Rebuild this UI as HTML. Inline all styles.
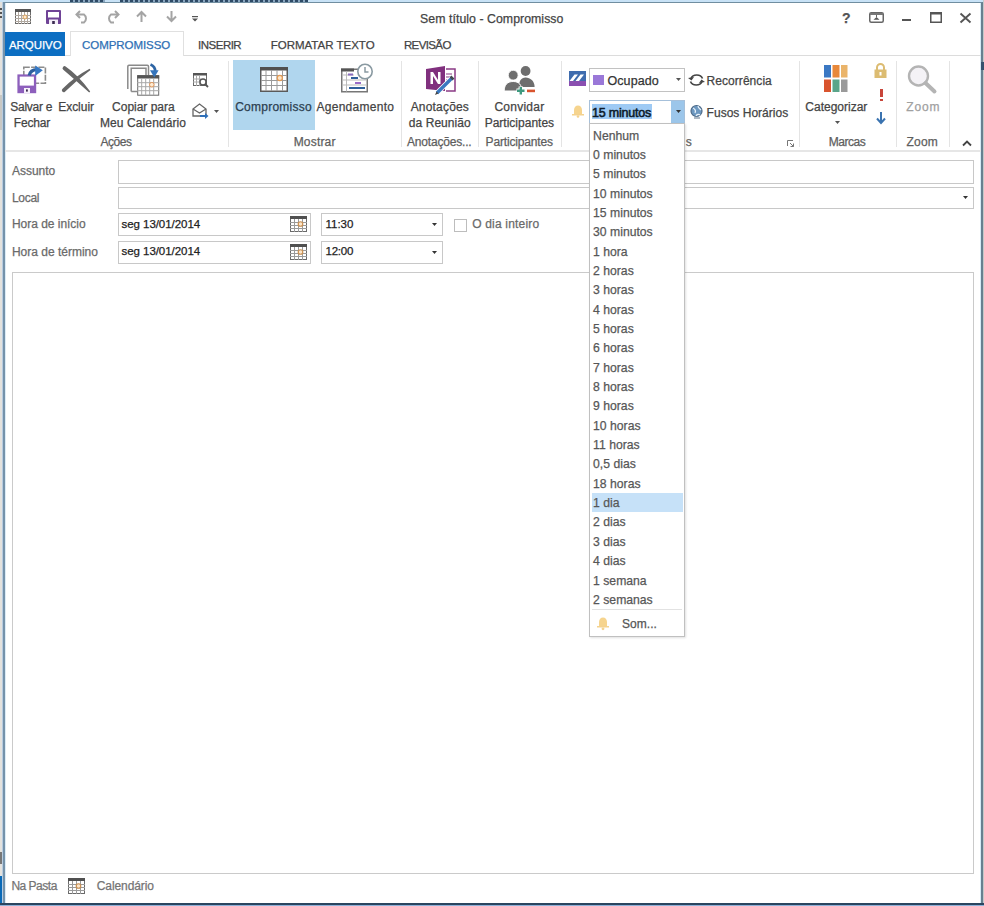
<!DOCTYPE html>
<html><head><meta charset="utf-8">
<style>
html,body{margin:0;padding:0}
body{width:984px;height:906px;overflow:hidden;position:relative;background:#e4e2de;font-family:"Liberation Sans",sans-serif;}
.a{position:absolute}
.t{position:absolute;white-space:nowrap;line-height:1;font-size:12px;color:#444;-webkit-text-stroke:0.25px currentColor}
.sep{position:absolute;width:1px;top:61px;height:86px;background:#e4e4e4}
.box{position:absolute;border:1px solid #c8c8c8;background:#fff;box-sizing:border-box}
svg{position:absolute;overflow:visible}
</style></head><body>
<!-- background strips -->
<div class="a" style="left:0;top:0;width:984px;height:2px;background:#c8e2f6"></div>
<div class="a" style="left:70px;top:0;width:35px;height:2px;background:repeating-linear-gradient(90deg,#2e4a66 0 3px,#8aa6c0 3px 5px)"></div>
<div class="a" style="left:120px;top:0;width:188px;height:2px;background:repeating-linear-gradient(90deg,#2e4a66 0 3px,#8aa6c0 3px 5px)"></div>
<div class="a" style="left:0;top:903px;width:984px;height:3px;background:#8eb0d8"></div>
<div class="a" style="left:0;top:903px;width:984px;height:2px;background:#2a4560"></div>
<div class="a" style="left:0;top:876px;width:3px;height:27px;background:#0a6ab8"></div>
<div class="a" style="left:983px;top:0;width:1px;height:903px;background:#c4c8c8"></div>
<div class="a" style="left:0;top:8px;width:3px;height:2px;background:#555"></div>
<div class="a" style="left:0;top:12px;width:3px;height:2px;background:#555"></div>
<div class="a" style="left:0;top:16px;width:3px;height:2px;background:#555"></div>
<div class="a" style="left:0;top:95px;width:3px;height:35px;background:#c8c8c4"></div>
<div class="a" style="left:0;top:852px;width:3px;height:12px;background:#777"></div>

<!-- window -->
<div class="a" style="left:3px;top:2px;width:980px;height:901px;background:#fff;box-sizing:border-box;border-top:1px solid #708ea0;border-left:2px solid #7592aa;border-right:2px solid #668090;box-shadow:-1px 0 0 #b8cce0, inset 1px 0 0 #dcecf6, inset -1px 0 0 #d4eaf6"></div>

<div class="a" style="left:981px;top:62px;width:3px;height:8px;background:#34526e"></div>
<!-- ===== title bar ===== -->
<!-- QAT calendar -->
<svg style="left:15px;top:9px" width="16" height="15" viewBox="0 0 16 15">
 <rect x="0.5" y="0.5" width="15" height="14" fill="#fff" stroke="#6a6a6a"/>
 <rect x="0" y="0" width="16" height="3" fill="#555"/>
 <path d="M3.5 3v12M6.5 3v12M9.5 3v12M12.5 3v12M0 6.5h16M0 9.5h16M0 12.5h16" stroke="#b0a8a0" stroke-width="1"/>
 <circle cx="10" cy="8" r="2" fill="#fde9cf" stroke="#d9a05a" stroke-width="1"/>
</svg>
<!-- QAT save -->
<svg style="left:45.5px;top:10px" width="15" height="14" viewBox="0 0 15 14">
 <rect x="0" y="0" width="15" height="14" rx="1" fill="#6f4396"/>
 <rect x="2" y="2" width="11" height="5.5" fill="#fff"/>
 <rect x="3" y="9.5" width="9" height="4.5" fill="#f4eef8"/>
 <rect x="6.2" y="11" width="2.6" height="3" fill="#3a2a50"/>
</svg>
<!-- undo / redo / up / down / customize -->
<svg style="left:75px;top:10px" width="16" height="14" viewBox="0 0 16 14" fill="none" stroke="#a4a4a4" stroke-width="2">
 <path d="M5 1L1.5 4.5 5 8"/><path d="M2 4.5h7a5 5 0 0 1 0 8H6"/>
</svg>
<svg style="left:104px;top:10px" width="16" height="14" viewBox="0 0 16 14" fill="none" stroke="#a4a4a4" stroke-width="2">
 <path d="M11 1l3.5 3.5L11 8"/><path d="M14 4.5H7a5 5 0 0 0 0 8h3"/>
</svg>
<svg style="left:136px;top:11px" width="11" height="11" viewBox="0 0 11 11" fill="none" stroke="#a4a4a4" stroke-width="2">
 <path d="M1 5.5L5.5 1 10 5.5M5.5 1.5V11"/>
</svg>
<svg style="left:166px;top:11px" width="11" height="11" viewBox="0 0 11 11" fill="none" stroke="#a4a4a4" stroke-width="2">
 <path d="M1 5.5L5.5 10 10 5.5M5.5 9.5V0"/>
</svg>
<svg style="left:192px;top:16px" width="6" height="6" viewBox="0 0 6 6">
 <rect x="0" y="0" width="6" height="1.2" fill="#555"/><path d="M0 2.5h6L3 5.5z" fill="#555"/>
</svg>
<!-- window buttons -->
<div class="t" style="left:842px;top:11px;font-size:14px;font-weight:bold;color:#555">?</div>
<svg style="left:869px;top:11.5px" width="15" height="11" viewBox="0 0 15 11">
 <rect x="0.75" y="0.75" width="13.5" height="9.5" rx="1.5" fill="none" stroke="#666" stroke-width="1.5"/>
 <rect x="1" y="1" width="13" height="2" fill="#777"/>
 <path d="M4.5 7.8L7.5 5 10.5 7.8z" fill="#555"/>
 <rect x="7" y="3" width="1" height="2" fill="#666"/>
</svg>
<div class="a" style="left:902px;top:19px;width:9px;height:2px;background:#555"></div>
<svg style="left:930px;top:12px" width="12" height="11" viewBox="0 0 12 11">
 <rect x="0.75" y="0.75" width="10.5" height="9.5" fill="none" stroke="#555" stroke-width="1.5"/>
 <rect x="0" y="0" width="12" height="2.5" fill="#555"/>
</svg>
<svg style="left:960px;top:13px" width="11" height="10" viewBox="0 0 11 10" stroke="#555" stroke-width="1.9">
 <path d="M0.5 0.5L10.5 9.5M10.5 0.5L0.5 9.5"/>
</svg>

<!-- ===== tabs ===== -->
<div class="a" style="left:5px;top:55px;width:976px;height:1px;background:#dcdcdc"></div>
<div class="a" style="left:5px;top:32px;width:60px;height:24px;background:#0c6ec2"></div>
<div class="a" style="left:70px;top:31px;width:114px;height:25px;background:#fff;border:1px solid #e0e0e0;border-bottom:none;box-sizing:border-box"></div>

<!-- ===== ribbon ===== -->
<div class="a" style="left:5px;top:150px;width:976px;height:2px;background:#e6e6e6"></div>
<div class="sep" style="left:228px"></div>
<div class="sep" style="left:401px"></div>
<div class="sep" style="left:478px"></div>
<div class="sep" style="left:561px"></div>
<div class="sep" style="left:799px"></div>
<div class="sep" style="left:896px"></div>
<div class="sep" style="left:949px"></div>

<!-- Salvar e Fechar icon -->
<svg style="left:17px;top:65px" width="30" height="29" viewBox="0 0 30 29">
 <rect x="6.8" y="2.2" width="21.6" height="16" fill="#fff" stroke="#8c8c8c" stroke-width="1.6" stroke-dasharray="6 1.3"/>
 <rect x="0.4" y="9.4" width="18.8" height="18.8" fill="#8d5fbc"/>
 <rect x="2.7" y="11.6" width="14.2" height="9" fill="#fff"/>
 <rect x="7" y="23" width="6" height="5.2" fill="#f6f0fa"/>
 <rect x="9" y="24.4" width="1.8" height="2.2" fill="#3a2a50"/>
 <path d="M12.2 10.5Q13.5 4.6 19.8 4.6" fill="none" stroke="#2d5f9e" stroke-width="3.3"/>
 <path d="M18.2 0.4L25.8 5.3 18.2 10.9z" fill="#3578c4"/>
</svg>
<!-- Excluir X -->
<svg style="left:58px;top:62px" width="36" height="34" viewBox="0 0 36 34">
 <path d="M5.3 7.8A1.95 1.95 0 0 1 7.9 4.7Q20.5 13.2 32.2 29.6L31.2 30.6Q17 17.8 5.3 7.8Z" fill="#666"/>
 <path d="M4.6 26.7Q17 14.3 31.6 6.7L32.5 7.9Q19.5 17.3 7 29.7A1.85 1.85 0 0 1 4.6 26.7Z" fill="#666"/>
</svg>
<!-- Copiar para Meu Calendario -->
<svg style="left:127px;top:63px" width="33" height="33" viewBox="0 0 33 33">
 <path d="M0.8 26V3.5Q0.8 2.3 2 2.3H20.3Q21.5 2.3 21.5 3.5V12" fill="none" stroke="#8a8a8a" stroke-width="1.5"/>
 <path d="M4.2 28.6V5.2H19V12M4.2 28.6H10" fill="none" stroke="#8a8a8a" stroke-width="1.5"/>
 <g transform="translate(10.2,12.2)">
  <rect x="0.5" y="0.5" width="21" height="19.5" fill="#fff" stroke="#6a6a6a"/>
  <rect x="0" y="0" width="22" height="3.3" fill="#555"/>
  <path d="M4.5 3v17M8.5 3v17M12.5 3v17M16.5 3v17M0 7.5h22M0 11.5h22M0 15.5h22" stroke="#a8a8a8"/>
  <circle cx="14.6" cy="9.5" r="2.3" fill="#fdebd3" stroke="#e0955a"/>
 </g>
 <path d="M23.5 1.4Q28.4 3.4 28.2 8.5" fill="none" stroke="#2d64a4" stroke-width="2.7"/>
 <path d="M23 7.2h8.6l-4.3 7.4z" fill="#3474bc"/>
</svg>
<!-- small icons -->
<svg style="left:193px;top:73px" width="16" height="15" viewBox="0 0 16 15">
 <rect x="0.5" y="0.5" width="13" height="12" fill="#fff" stroke="#6a6a6a"/>
 <rect x="0" y="0" width="14" height="2.5" fill="#555"/>
 <path d="M3.5 3v10M6.5 3v10M0 6h8M0 9h7" stroke="#aaa"/>
 <circle cx="10" cy="9" r="3" fill="#fff" stroke="#555" stroke-width="1.4"/>
 <path d="M12 11l3 3" stroke="#555" stroke-width="1.8"/>
</svg>
<svg style="left:192px;top:103px" width="17" height="16" viewBox="0 0 17 16" fill="none">
 <path d="M1 6L7.5 1 14 6v7H1z" fill="#fff" stroke="#666" stroke-width="1.3"/>
 <path d="M1 6l6.5 4 6.5-4" stroke="#666" stroke-width="1.3"/>
 <path d="M8 13h6" stroke="#2f6fb8" stroke-width="2"/>
 <path d="M13 10l3.5 3-3.5 3z" fill="#2f6fb8"/>
</svg>
<svg style="left:214px;top:110px" width="5" height="3" viewBox="0 0 5 3"><path d="M0 0h5L2.5 3z" fill="#555"/></svg>

<!-- Compromisso (selected) -->
<div class="a" style="left:233px;top:60px;width:82px;height:70px;background:#b0d6ee"></div>
<svg style="left:260px;top:67px" width="28" height="25" viewBox="0 0 28 25">
 <rect x="0.75" y="0.75" width="26.5" height="23.5" fill="#fff" stroke="#5a5a5a" stroke-width="1.5"/>
 <rect x="0" y="0" width="28" height="3.5" fill="#505050"/>
 <path d="M6 3v21M11.5 3v21M17 3v21M22.5 3v21M1 8.5h26M1 13.5h26M1 18.5h26" stroke="#9a9a9a"/>
 <circle cx="19.8" cy="11" r="2.6" fill="#fde6c8" stroke="#e39a55" stroke-width="1.2"/>
</svg>
<!-- Agendamento -->
<svg style="left:340.5px;top:61.5px" width="33" height="31" viewBox="0 0 33 30">
 <rect x="0.75" y="6.75" width="25.5" height="22.5" fill="#fff" stroke="#777" stroke-width="1.5"/>
 <rect x="0" y="6" width="13" height="3" fill="#555"/>
 <path d="M1 12.5h12M1 17.5h25M1 22.5h25M5.5 9v20" stroke="#bbb"/>
 <rect x="7" y="11" width="5" height="2" fill="#8a6cc0"/>
 <rect x="10" y="14.5" width="7" height="2" fill="#2f5f9a"/>
 <rect x="14" y="19.5" width="6" height="2" fill="#9a6cc8"/>
 <rect x="8" y="24.5" width="16" height="2" fill="#2f5f9a"/>
 <circle cx="24" cy="9" r="7.2" fill="#fff" stroke="#8a9aa2" stroke-width="1.6"/>
 <path d="M24 4.5V9.5h3.5" fill="none" stroke="#8a9aa2" stroke-width="1.5"/>
</svg>
<!-- OneNote -->
<svg style="left:425px;top:65px" width="32" height="31" viewBox="0 0 32 31">
 <path d="M21 4h9v22h-9" fill="#fff" stroke="#8a3a85" stroke-width="1.5"/>
 <path d="M21 9h6M21 12h6M21 15h5" stroke="#8a3a85" stroke-width="1.2"/>
 <path d="M1 4L20 1v25L1 24z" fill="#80307e"/>
 <path d="M5.5 19V7h2.5l5 8V7h2.5v12h-2.5l-5-8v8z" fill="#fff"/>
 <path d="M27 13L12 28" stroke="#fff" stroke-width="5"/>
 <path d="M27 13L12 28" stroke="#3a78c0" stroke-width="3.4"/>
 <path d="M10 30l1.5-3.5 2 2z" fill="#444"/>
 <path d="M25.5 11.5l3 3" stroke="#404a50" stroke-width="2.5"/>
</svg>
<!-- People -->
<svg style="left:503px;top:66px" width="34" height="29" viewBox="0 0 34 29">
 <circle cx="22.6" cy="5" r="4.9" fill="#6e6e6e"/>
 <path d="M16 21c0-6 2-9.5 6.6-9.5S31.6 15 31.6 21z" fill="#6e6e6e"/>
 <circle cx="10.2" cy="9.2" r="4.9" fill="#6e6e6e" stroke="#fff" stroke-width="0.8"/>
 <path d="M1.2 25c0-6 3-9.5 9-9.5s8.5 3.5 8.5 9.5z" fill="#6e6e6e" stroke="#fff" stroke-width="1"/>
 <path d="M17.8 20.5v8.5M13.5 24.8h8.5" stroke="#fff" stroke-width="4.4"/>
 <path d="M17.8 21v7.5M14 24.8h7.5" stroke="#3f9a80" stroke-width="2.4"/>
 <rect x="24" y="23.6" width="8" height="2.6" fill="#d9542e"/>
</svg>

<!-- Opcoes -->
<svg style="left:569px;top:71px" width="17" height="15" viewBox="0 0 17 15">
 <rect x="0" y="0" width="17" height="10" fill="#3f6cae"/>
 <rect x="0" y="10" width="17" height="5" fill="#8a4fb0"/>
 <path d="M0.5 10h3.5l5-6.5H5.5zM6.5 10h3.5l5-6.5h-3.5z" fill="#fff"/>
</svg>
<div class="box" style="left:589px;top:68px;width:96px;height:24px;border-color:#c2c2c2"></div>
<div class="a" style="left:593px;top:75px;width:11px;height:10px;background:#9a78d8"></div>
<svg style="left:676px;top:78px" width="5" height="3" viewBox="0 0 5 3"><path d="M0 0h5L2.5 3z" fill="#555"/></svg>
<svg style="left:688px;top:73px" width="17" height="14" viewBox="0 0 17 14" fill="none" stroke="#444" stroke-width="1.6">
 <path d="M3 5.5a6 5 0 0 1 11.5 0"/><path d="M14 8.5a6 5 0 0 1-11.5 0"/>
 <path d="M0 5l3.5 2.5L6 4z" fill="#444" stroke="none"/><path d="M17 9l-3.5-2.5L11 10z" fill="#444" stroke="none"/>
</svg>
<svg style="left:571px;top:104px" width="14" height="14" viewBox="0 0 14 14">
 <path d="M3 10V6a4 4.5 0 0 1 8 0v4z" fill="#f6d48e"/>
 <rect x="1" y="10" width="12" height="1.5" fill="#f4d28e"/>
 <circle cx="7" cy="12.5" r="1.3" fill="#f4d28e"/>
</svg>
<!-- 15 minutos combo -->
<div class="box" style="left:589px;top:100px;width:96px;height:24px;border-color:#a6c0da"></div>
<div class="a" style="left:671px;top:101px;width:13px;height:22px;background:#9cc6ea"></div>
<svg style="left:676px;top:110px" width="5" height="3" viewBox="0 0 5 3"><path d="M0 0h5L2.5 3z" fill="#333"/></svg>
<div class="a" style="left:592px;top:104px;width:60px;height:15px;background:#9ecaf4"></div>
<svg style="left:690px;top:104px" width="14" height="15" viewBox="0 0 14 15">
 <circle cx="6.5" cy="7" r="5.5" fill="#6d98c0" stroke="#4d6a88" stroke-width="1.2"/>
 <path d="M3 4c2 1 3 3 2 5M8 2c0 2 2 3 3 4M6 12c1-2 3-2 4-1" stroke="#e8f2fa" stroke-width="1.2" fill="none"/>
 <path d="M4 14h6" stroke="#7a8a9a" stroke-width="1.2"/>
</svg>
<svg style="left:787px;top:140px" width="7" height="7" viewBox="0 0 7 7" fill="none" stroke="#777" stroke-width="1">
 <path d="M0.5 6V0.5H6"/><path d="M3 3l3.5 3.5M6.5 3.5v3h-3"/>
</svg>

<!-- Marcas -->
<svg style="left:824px;top:65px" width="24" height="28" viewBox="0 0 24 28">
 <rect x="0" y="0" width="7" height="12.5" fill="#3b78c3"/>
 <rect x="8.5" y="0" width="7" height="12.5" fill="#e8883a"/>
 <rect x="17" y="0" width="6.5" height="12.5" fill="#eab46a"/>
 <rect x="0" y="14.5" width="7" height="12.5" fill="#d9542e"/>
 <rect x="8.5" y="14.5" width="7" height="12.5" fill="#5aa58a"/>
 <rect x="17" y="14.5" width="6.5" height="12.5" fill="#9a9a9a"/>
</svg>
<svg style="left:835px;top:121px" width="5" height="3" viewBox="0 0 5 3"><path d="M0 0h5L2.5 3z" fill="#555"/></svg>
<svg style="left:874px;top:63px" width="13" height="15" viewBox="0 0 13 15">
 <path d="M3 7V4.5a3.5 3.5 0 0 1 7 0V7" fill="none" stroke="#dcbc72" stroke-width="2"/>
 <rect x="0.5" y="6.5" width="12" height="8.5" fill="#dcbc72"/>
 <rect x="5.5" y="9" width="2" height="3.5" fill="#fff"/>
</svg>
<div class="a" style="left:879.5px;top:88.5px;width:3px;height:8px;background:#c8453a"></div>
<div class="a" style="left:879.5px;top:98.5px;width:3px;height:2.5px;background:#c8453a"></div>
<svg style="left:876px;top:112px" width="10" height="12" viewBox="0 0 10 12" fill="none" stroke="#3a73b0" stroke-width="2">
 <path d="M5 0v11M1 6.5l4 4.5 4-4.5"/>
</svg>
<!-- Zoom -->
<svg style="left:907px;top:65px" width="30" height="28" viewBox="0 0 30 28" fill="none">
 <circle cx="11.5" cy="11" r="9.5" fill="#f4f2f6" stroke="#b4b4b4" stroke-width="2.4"/>
 <path d="M18.5 18l9 8.5" stroke="#b4b4b4" stroke-width="4" stroke-linecap="round"/>
</svg>
<svg style="left:962px;top:140px" width="10" height="6" viewBox="0 0 10 6" fill="none" stroke="#444" stroke-width="1.8">
 <path d="M1 5.5L5 1.5 9 5.5"/>
</svg>

<!-- ===== form ===== -->
<div class="box" style="left:118px;top:160px;width:856px;height:24px"></div>
<div class="box" style="left:118px;top:187px;width:856px;height:22px"></div>
<svg style="left:963px;top:196px" width="5" height="3" viewBox="0 0 5 3"><path d="M0 0h5L2.5 3z" fill="#333"/></svg>
<div class="box" style="left:118px;top:213px;width:193px;height:23px"></div>
<div class="box" style="left:118px;top:241px;width:193px;height:23px"></div>
<svg style="left:290px;top:216px" width="17" height="16" viewBox="0 0 17 16">
 <rect x="0.5" y="0.5" width="16" height="15" fill="#fff" stroke="#6a6a6a"/>
 <rect x="0" y="0" width="17" height="3" fill="#505050"/>
 <path d="M4.5 3v13M8.5 3v13M12.5 3v13M0 6.5h17M0 9.5h17M0 12.5h17" stroke="#9a9a9a"/>
 <circle cx="10.5" cy="8" r="2.3" fill="#fbe6cc" stroke="#c98e4e" stroke-width="1.1"/>
</svg>
<svg style="left:290px;top:244px" width="17" height="16" viewBox="0 0 17 16">
 <rect x="0.5" y="0.5" width="16" height="15" fill="#fff" stroke="#6a6a6a"/>
 <rect x="0" y="0" width="17" height="3" fill="#505050"/>
 <path d="M4.5 3v13M8.5 3v13M12.5 3v13M0 6.5h17M0 9.5h17M0 12.5h17" stroke="#9a9a9a"/>
 <circle cx="10.5" cy="8" r="2.3" fill="#fbe6cc" stroke="#c98e4e" stroke-width="1.1"/>
</svg>
<div class="box" style="left:321px;top:213px;width:122px;height:23px"></div>
<div class="box" style="left:321px;top:241px;width:122px;height:23px"></div>
<svg style="left:432px;top:223px" width="5" height="3" viewBox="0 0 5 3"><path d="M0 0h5L2.5 3z" fill="#333"/></svg>
<svg style="left:432px;top:251px" width="5" height="3" viewBox="0 0 5 3"><path d="M0 0h5L2.5 3z" fill="#333"/></svg>
<div class="box" style="left:454px;top:219px;width:13px;height:13px;border-color:#bdbdbd"></div>

<!-- body -->
<div class="box" style="left:12px;top:272px;width:962px;height:602px;border-color:#cacaca"></div>

<!-- status bar -->
<svg style="left:68px;top:878px" width="17" height="16" viewBox="0 0 17 16">
 <rect x="0.5" y="0.5" width="16" height="15" fill="#fff" stroke="#6a6a6a"/>
 <rect x="0" y="0" width="17" height="3" fill="#505050"/>
 <path d="M4.5 3v13M8.5 3v13M12.5 3v13M0 6.5h17M0 9.5h17M0 12.5h17" stroke="#9a9a9a"/>
 <circle cx="10.5" cy="8" r="2.3" fill="#fbe6cc" stroke="#c98e4e" stroke-width="1.1"/>
</svg>

<!-- ===== dropdown ===== -->
<div class="a" style="left:589px;top:123px;width:96px;height:514px;background:#fff;border:1px solid #c0c0c0;box-sizing:border-box;box-shadow:1px 1px 2px rgba(0,0,0,0.12)"></div>
<div class="a" style="left:592px;top:493px;width:91px;height:19px;background:#c6e1f8"></div>
<div class="a" style="left:592px;top:609px;width:90px;height:1px;background:#e2e2e2"></div>
<svg style="left:596px;top:616px" width="14" height="15" viewBox="0 0 14 15">
 <path d="M3 10V6a4 4.5 0 0 1 8 0v4z" fill="#f6d48e"/>
 <rect x="1" y="10" width="12" height="1.5" fill="#f4d28e"/>
 <circle cx="7" cy="12.8" r="1.4" fill="#f4d28e"/>
</svg>

<div class="t" style="left:420.1px;top:13.0px;font-size:12.3px;color:#444;letter-spacing:0.05px;">Sem título - Compromisso</div>
<div class="t" style="left:8.9px;top:40.0px;font-size:11.5px;color:#fff;letter-spacing:-0.04px;">ARQUIVO</div>
<div class="t" style="left:82.0px;top:40.0px;font-size:11.5px;color:#2e6fb4;letter-spacing:-0.06px;">COMPROMISSO</div>
<div class="t" style="left:198.1px;top:40.0px;font-size:11.5px;color:#444;letter-spacing:-0.51px;">INSERIR</div>
<div class="t" style="left:270.7px;top:40.0px;font-size:11.5px;color:#444;">FORMATAR TEXTO</div>
<div class="t" style="left:403.9px;top:40.0px;font-size:11.5px;color:#444;letter-spacing:-0.61px;">REVISÃO</div>
<div class="t" style="left:10.2px;top:101.0px;font-size:12px;color:#444;letter-spacing:-0.24px;">Salvar e</div>
<div class="t" style="left:13.8px;top:117.0px;font-size:12px;color:#444;letter-spacing:-0.20px;">Fechar</div>
<div class="t" style="left:58.2px;top:101.0px;font-size:12px;color:#444;letter-spacing:-0.03px;">Excluir</div>
<div class="t" style="left:112.1px;top:101.0px;font-size:12px;color:#444;letter-spacing:-0.02px;">Copiar para</div>
<div class="t" style="left:99.9px;top:117.0px;font-size:12px;color:#444;letter-spacing:0.11px;">Meu Calendário</div>
<div class="t" style="left:100.6px;top:136.0px;font-size:12px;color:#5e5e5e;letter-spacing:-0.50px;">Ações</div>
<div class="t" style="left:235.2px;top:101.0px;font-size:12px;color:#2c3e50;letter-spacing:0.24px;">Compromisso</div>
<div class="t" style="left:316.5px;top:101.0px;font-size:12px;color:#444;letter-spacing:0.27px;">Agendamento</div>
<div class="t" style="left:293.7px;top:136.0px;font-size:12px;color:#5e5e5e;letter-spacing:0.18px;">Mostrar</div>
<div class="t" style="left:410.7px;top:101.0px;font-size:12px;color:#444;letter-spacing:0.18px;">Anotações</div>
<div class="t" style="left:408.8px;top:117.0px;font-size:12px;color:#444;letter-spacing:0.06px;">da Reunião</div>
<div class="t" style="left:407.0px;top:136.0px;font-size:12px;color:#5e5e5e;letter-spacing:-0.19px;">Anotações...</div>
<div class="t" style="left:494.4px;top:101.0px;font-size:12px;color:#444;letter-spacing:0.25px;">Convidar</div>
<div class="t" style="left:484.7px;top:117.0px;font-size:12px;color:#444;">Participantes</div>
<div class="t" style="left:485.6px;top:136.0px;font-size:12px;color:#5e5e5e;letter-spacing:-0.17px;">Participantes</div>
<div class="t" style="left:685.7px;top:136.0px;font-size:12px;color:#5e5e5e;">s</div>
<div class="t" style="left:607.5px;top:75.0px;font-size:12.5px;color:#333;letter-spacing:0.07px;">Ocupado</div>
<div class="t" style="left:706.6px;top:75.0px;font-size:12px;color:#444;letter-spacing:0.05px;">Recorrência</div>
<div class="t" style="left:592.1px;top:107.0px;font-size:12.5px;color:#0d1b2a;letter-spacing:-0.23px;-webkit-text-stroke:0.55px #0d1b2a;">15 minutos</div>
<div class="t" style="left:706.6px;top:107.0px;font-size:12px;color:#444;letter-spacing:0.02px;">Fusos Horários</div>
<div class="t" style="left:805.3px;top:101.0px;font-size:12px;color:#444;">Categorizar</div>
<div class="t" style="left:906.2px;top:101.0px;font-size:12px;color:#a0a0a0;letter-spacing:0.86px;">Zoom</div>
<div class="t" style="left:828.8px;top:136.0px;font-size:12px;color:#5e5e5e;letter-spacing:-0.46px;">Marcas</div>
<div class="t" style="left:906.6px;top:136.0px;font-size:12px;color:#5e5e5e;letter-spacing:0.19px;">Zoom</div>
<div class="t" style="left:11.9px;top:165.0px;font-size:12px;color:#6a6a6a;">Assunto</div>
<div class="t" style="left:11.9px;top:192.0px;font-size:12px;color:#6a6a6a;letter-spacing:-0.28px;">Local</div>
<div class="t" style="left:11.9px;top:218.0px;font-size:12px;color:#6a6a6a;letter-spacing:-0.02px;">Hora de início</div>
<div class="t" style="left:11.9px;top:246.0px;font-size:12px;color:#6a6a6a;">Hora de término</div>
<div class="t" style="left:121.5px;top:219.0px;font-size:11.5px;color:#222;letter-spacing:-0.05px;">seg 13/01/2014</div>
<div class="t" style="left:121.5px;top:246.0px;font-size:11.5px;color:#222;letter-spacing:-0.05px;">seg 13/01/2014</div>
<div class="t" style="left:325.6px;top:219.0px;font-size:11.5px;color:#222;letter-spacing:-0.06px;">11:30</div>
<div class="t" style="left:325.6px;top:246.0px;font-size:11.5px;color:#222;letter-spacing:-0.27px;">12:00</div>
<div class="t" style="left:472.2px;top:218.0px;font-size:12px;color:#6a6a6a;letter-spacing:0.19px;">O dia inteiro</div>
<div class="t" style="left:11.4px;top:880.0px;font-size:12px;color:#747474;letter-spacing:-0.49px;">Na Pasta</div>
<div class="t" style="left:96.8px;top:880.0px;font-size:12px;color:#747474;letter-spacing:-0.10px;">Calendário</div>
<div class="t" style="left:593.1px;top:130.0px;font-size:12.2px;color:#575757;">Nenhum</div>
<div class="t" style="left:593.1px;top:149.0px;font-size:12.2px;color:#575757;">0 minutos</div>
<div class="t" style="left:593.1px;top:168.0px;font-size:12.2px;color:#575757;">5 minutos</div>
<div class="t" style="left:593.1px;top:188.0px;font-size:12.2px;color:#575757;">10 minutos</div>
<div class="t" style="left:593.1px;top:207.0px;font-size:12.2px;color:#575757;">15 minutos</div>
<div class="t" style="left:593.1px;top:226.0px;font-size:12.2px;color:#575757;">30 minutos</div>
<div class="t" style="left:593.1px;top:246.0px;font-size:12.2px;color:#575757;">1 hora</div>
<div class="t" style="left:593.1px;top:265.0px;font-size:12.2px;color:#575757;">2 horas</div>
<div class="t" style="left:593.1px;top:284.0px;font-size:12.2px;color:#575757;">3 horas</div>
<div class="t" style="left:593.1px;top:304.0px;font-size:12.2px;color:#575757;">4 horas</div>
<div class="t" style="left:593.1px;top:323.0px;font-size:12.2px;color:#575757;">5 horas</div>
<div class="t" style="left:593.1px;top:342.0px;font-size:12.2px;color:#575757;">6 horas</div>
<div class="t" style="left:593.1px;top:362.0px;font-size:12.2px;color:#575757;">7 horas</div>
<div class="t" style="left:593.1px;top:381.0px;font-size:12.2px;color:#575757;">8 horas</div>
<div class="t" style="left:593.1px;top:400.0px;font-size:12.2px;color:#575757;">9 horas</div>
<div class="t" style="left:593.1px;top:420.0px;font-size:12.2px;color:#575757;">10 horas</div>
<div class="t" style="left:593.1px;top:439.0px;font-size:12.2px;color:#575757;">11 horas</div>
<div class="t" style="left:593.1px;top:458.0px;font-size:12.2px;color:#575757;">0,5 dias</div>
<div class="t" style="left:593.1px;top:478.0px;font-size:12.2px;color:#575757;">18 horas</div>
<div class="t" style="left:593.1px;top:497.0px;font-size:12.2px;color:#575757;">1 dia</div>
<div class="t" style="left:593.1px;top:516.0px;font-size:12.2px;color:#575757;">2 dias</div>
<div class="t" style="left:593.1px;top:536.0px;font-size:12.2px;color:#575757;">3 dias</div>
<div class="t" style="left:593.1px;top:555.0px;font-size:12.2px;color:#575757;">4 dias</div>
<div class="t" style="left:593.1px;top:575.0px;font-size:12.2px;color:#575757;">1 semana</div>
<div class="t" style="left:593.1px;top:594.0px;font-size:12.2px;color:#575757;">2 semanas</div>
<div class="t" style="left:621.9px;top:618.0px;font-size:12px;color:#555;letter-spacing:0.07px;">Som...</div>
</body></html>
